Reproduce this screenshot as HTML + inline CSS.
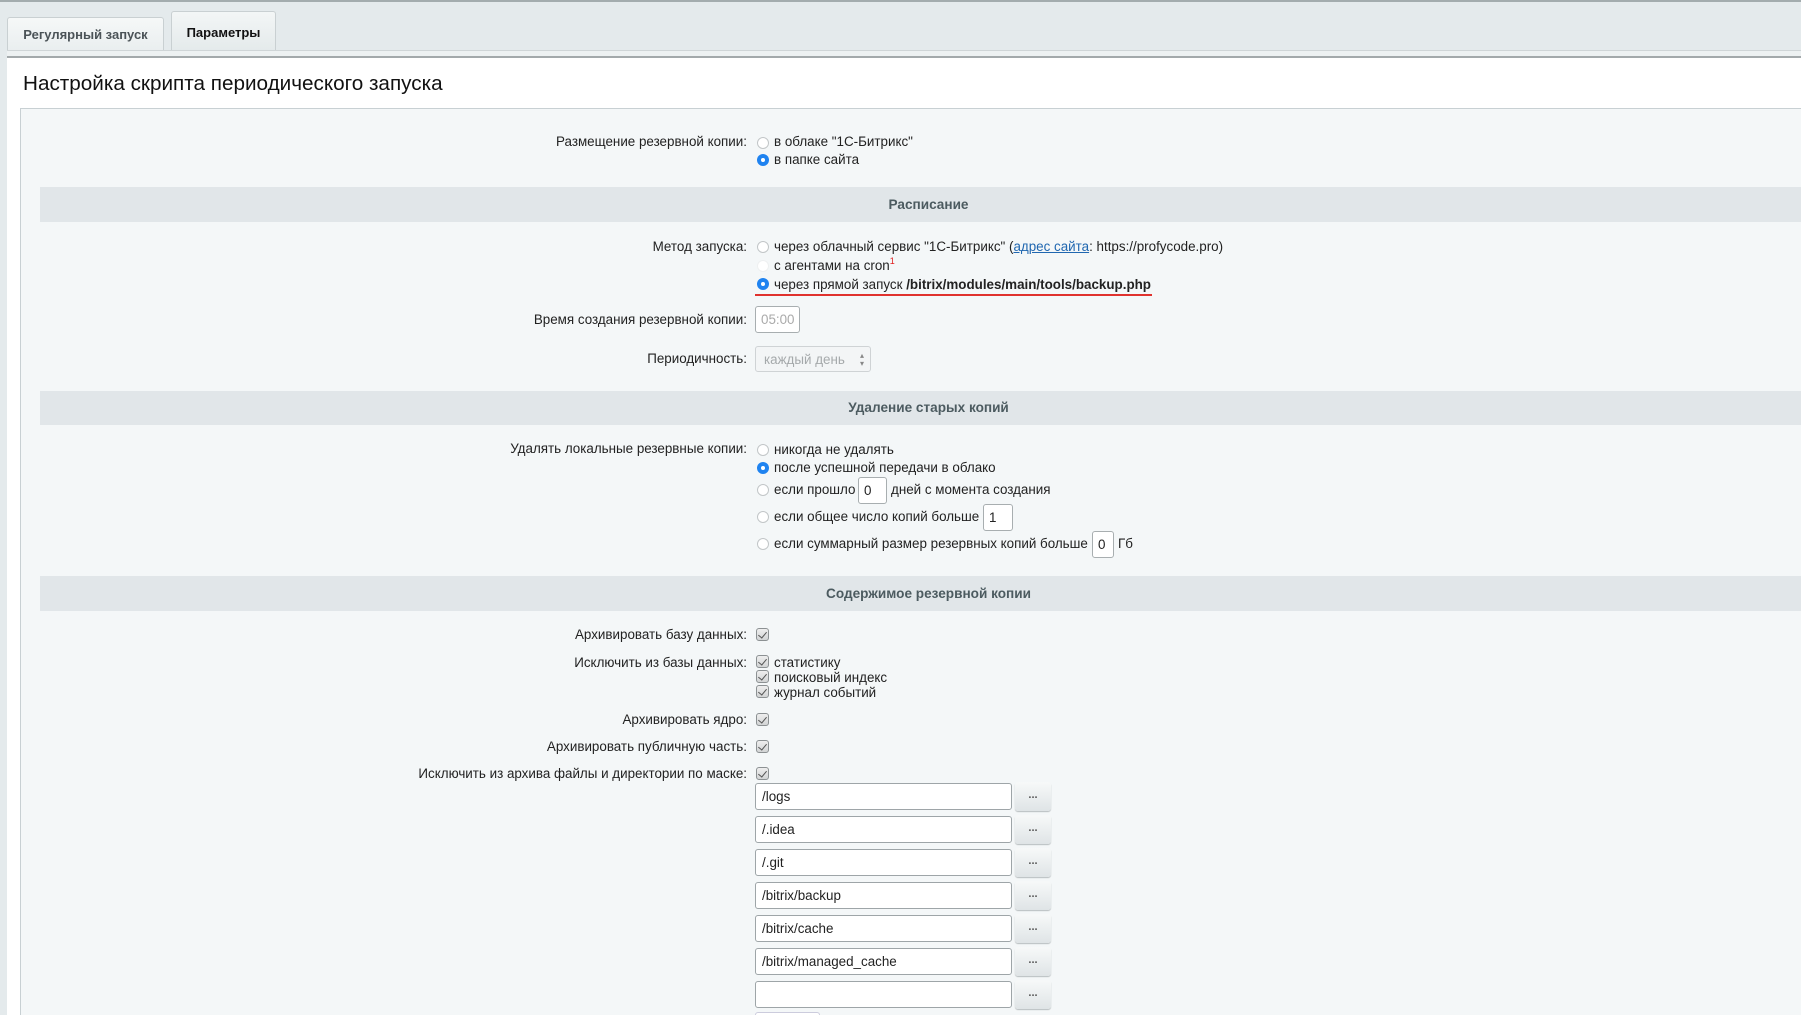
<!DOCTYPE html>
<html style="overflow:hidden"><head><meta charset="utf-8">
<style>
*{margin:0;padding:0;box-sizing:border-box}
html,body{width:1801px;height:1015px;overflow:hidden}
body{background:#e4eaec;font-family:"Liberation Sans",Arial,sans-serif;font-size:13.4px;color:#000;position:relative}
.a{position:absolute}
.topline{left:0;top:0;width:1801px;height:2px;background:#a3acae}
.tab{border:1px solid #c9d0d2;border-bottom:none;border-radius:3px 3px 0 0;font-weight:bold;color:#4b5357;font-size:13px;text-align:center}
.strip{left:7px;top:50px;width:1794px;height:6px;background:#edf1f2;border-top:1px solid #cfd5d7}
.white{left:7px;top:56px;width:1794px;height:959px;background:#fff;border-top:2px solid #a3a9ab}
.inner{left:20px;top:108px;width:1781px;height:907px;background:#f4f7f8;border-top:1px solid #c8d0d3;border-left:1px solid #c8d0d3}
.hd{left:40px;width:1761px;padding-left:16px;background:#e1e6e9;font-weight:bold;color:#4c5b60;text-align:center;font-size:13.6px}
.l{right:1054px;text-align:right;line-height:16px;white-space:nowrap;color:#222}
.t{left:774px;line-height:16px;white-space:nowrap;color:#222}
.r{left:757px;width:12px;height:12px;border-radius:50%;border:1px solid #c2c6c8;background:#fff}
.rs{border:none;background:#1f83f0}
.rs::after{content:"";position:absolute;left:4px;top:4px;width:4px;height:4px;border-radius:50%;background:#fff}
.cb{left:756px;width:13px;height:13px;border:1px solid #8c9193;border-radius:3px;background:linear-gradient(#eee,#d2d4d5)}
.cb::after{content:"";position:absolute;left:3px;top:1px;width:4px;height:7px;border:solid #555;border-width:0 1.5px 1.5px 0;transform:rotate(40deg)}
.sin{background:#fff;border:1px solid #a8aeb0;border-radius:3px;height:27px;line-height:25px;padding-left:5px;color:#222}
.inp{left:755px;width:257px;height:27px;background:#fff;border:1px solid #9ea5a8;border-radius:3px;padding-left:6px;line-height:25px;font-size:13.4px;color:#222}
.btn{left:1015px;width:36px;height:29px;border-radius:3px;background:linear-gradient(#f7f9f9,#dfe4e6);box-shadow:0 1px 1px #b7bdbf;text-align:center;line-height:26px;color:#555;font-weight:bold;font-size:11px}
sup{line-height:0;font-size:9px;color:#e02020;vertical-align:6px}
</style></head><body>
<div class="a topline"></div>
<div class="a tab" style="left:7px;top:17px;width:157px;height:34px;line-height:33px;background:linear-gradient(#f6f8f8,#e9eeef)">Регулярный запуск</div>
<div class="a tab" style="left:171px;top:11px;width:105px;height:40px;line-height:42px;background:linear-gradient(#f3f6f6,#e4eaeb);color:#111">Параметры</div>
<div class="a strip"></div>
<div class="a white"></div>
<div class="a" style="left:23px;top:72px;font-size:20.7px;line-height:24px;color:#111">Настройка скрипта периодического запуска</div>
<div class="a inner"></div>

<div class="a l" style="top:134px">Размещение резервной копии:</div>
<div class="a r" style="top:137px"></div><div class="a t" style="top:134px">в облаке "1С-Битрикс"</div>
<div class="a r rs" style="top:154px"></div><div class="a t" style="top:152px">в папке сайта</div>

<div class="a hd" style="top:187px;height:35px;line-height:35px">Расписание</div>

<div class="a l" style="top:239px">Метод запуска:</div>
<div class="a r" style="top:241px"></div><div class="a t" style="top:239px">через облачный сервис "1С-Битрикс" (<span style="color:#2067b0;text-decoration:underline">адрес сайта</span>: https://profycode.pro)</div>
<div class="a r" style="top:260px;border-color:#eef0f1"></div><div class="a t" style="top:258px">с агентами на cron<sup>1</sup></div>
<div class="a r rs" style="top:278px"></div><div class="a t" style="top:277px">через прямой запуск <b>/bitrix/modules/main/tools/backup.php</b></div>
<div class="a" style="left:755px;top:294px;width:397px;height:2px;background:#e0322e"></div>

<div class="a l" style="top:312px">Время создания резервной копии:</div>
<div class="a sin" style="left:755px;top:306px;width:45px;color:#aaa;overflow:hidden">05:00</div>
<div class="a l" style="top:351px">Периодичность:</div>
<div class="a sin" style="left:755px;top:346px;width:116px;height:26px;color:#a5a9ab;background:#f3f5f6;border-color:#cfd3d5;padding-left:8px">каждый день<span style="position:absolute;right:6px;top:-4px;font-size:8px;color:#888">▴</span><span style="position:absolute;right:6px;top:4px;font-size:8px;color:#888">▾</span></div>

<div class="a hd" style="top:391px;height:34px;line-height:34px">Удаление старых копий</div>

<div class="a l" style="top:441px">Удалять локальные резервные копии:</div>
<div class="a r" style="top:444px"></div><div class="a t" style="top:442px">никогда не удалять</div>
<div class="a r rs" style="top:462px"></div><div class="a t" style="top:460px">после успешной передачи в облако</div>
<div class="a r" style="top:484px"></div><div class="a t" style="top:482px">если прошло</div>
<div class="a sin" style="left:858px;top:477px;width:29px;height:27px">0</div>
<div class="a t" style="left:891px;top:482px">дней с момента создания</div>
<div class="a r" style="top:511px"></div><div class="a t" style="top:509px">если общее число копий больше</div>
<div class="a sin" style="left:983px;top:504px;width:30px;height:27px">1</div>
<div class="a r" style="top:538px"></div><div class="a t" style="top:536px">если суммарный размер резервных копий больше</div>
<div class="a sin" style="left:1092px;top:531px;width:22px;height:27px">0</div>
<div class="a t" style="left:1118px;top:536px">Гб</div>

<div class="a hd" style="top:576px;height:35px;line-height:35px">Содержимое резервной копии</div>

<div class="a l" style="top:627px">Архивировать базу данных:</div><div class="a cb" style="top:628px"></div>
<div class="a l" style="top:655px">Исключить из базы данных:</div>
<div class="a cb" style="top:655px"></div><div class="a t" style="top:655px">статистику</div>
<div class="a cb" style="top:670px"></div><div class="a t" style="top:670px">поисковый индекс</div>
<div class="a cb" style="top:685px"></div><div class="a t" style="top:685px">журнал событий</div>
<div class="a l" style="top:712px">Архивировать ядро:</div><div class="a cb" style="top:713px"></div>
<div class="a l" style="top:739px">Архивировать публичную часть:</div><div class="a cb" style="top:740px"></div>
<div class="a l" style="top:766px">Исключить из архива файлы и директории по маске:</div><div class="a cb" style="top:767px"></div>

<div class="a inp" style="top:783px">/logs</div><div class="a btn" style="top:782px">...</div>
<div class="a inp" style="top:816px">/.idea</div><div class="a btn" style="top:815px">...</div>
<div class="a inp" style="top:849px">/.git</div><div class="a btn" style="top:848px">...</div>
<div class="a inp" style="top:882px">/bitrix/backup</div><div class="a btn" style="top:881px">...</div>
<div class="a inp" style="top:915px">/bitrix/cache</div><div class="a btn" style="top:914px">...</div>
<div class="a inp" style="top:948px">/bitrix/managed_cache</div><div class="a btn" style="top:947px">...</div>
<div class="a inp" style="top:981px"></div><div class="a btn" style="top:980px">...</div>
<div class="a" style="left:755px;top:1012px;width:65px;height:3px;background:#fff;border:1px solid #ccd;border-bottom:none;border-radius:3px 3px 0 0"></div>
</body></html>
